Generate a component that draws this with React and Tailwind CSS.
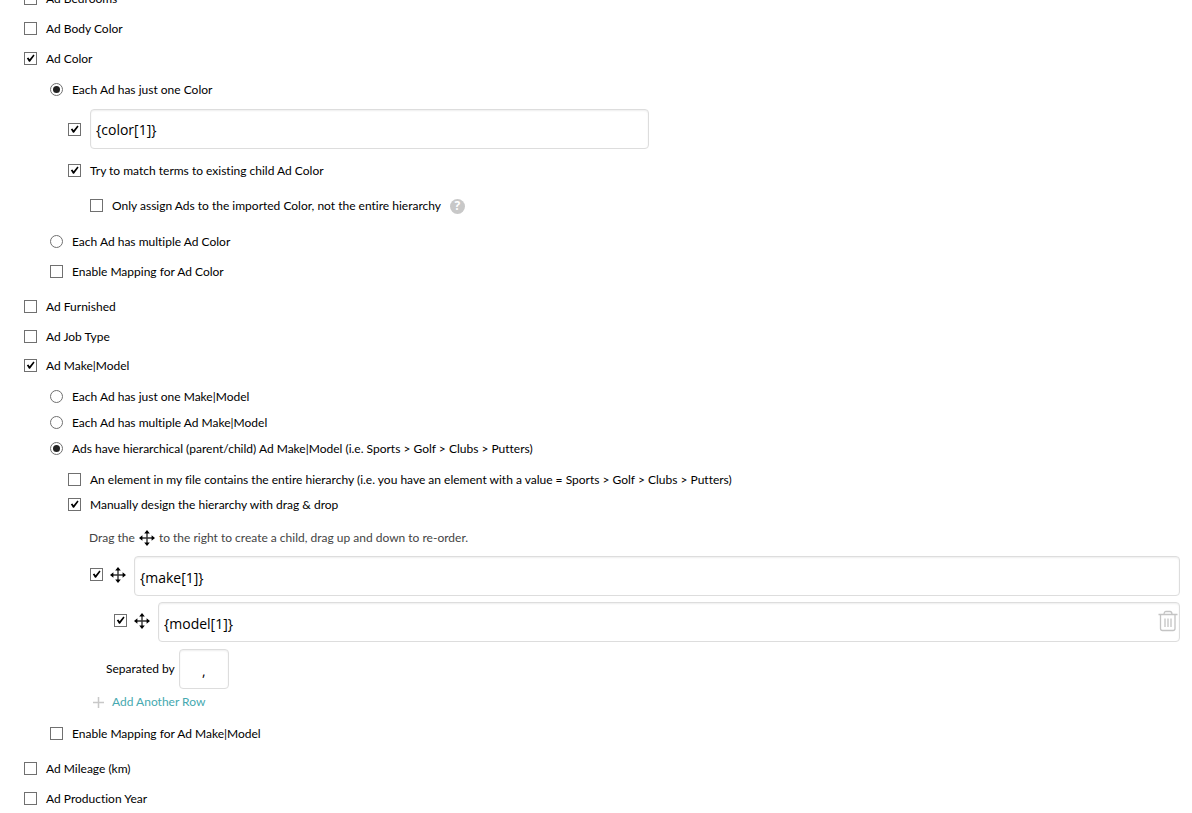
import React from "react";

const fieldClass =
  "h-10 min-w-0 rounded border border-[#dddddd] bg-white font-['Open_Sans',sans-serif] text-sm text-black shadow-[inset_0_1px_2px_rgba(0,0,0,0.07)] outline-none focus:border-[#46a9b0]";

function Checkbox({ checked, ...props }) {
  return (
    <span className="grid shrink-0">
      <input
        type="checkbox"
        defaultChecked={checked}
        className="peer col-start-1 row-start-1 size-[13px] appearance-none border border-[#707070] bg-white"
        {...props}
      />
      <svg
        viewBox="0 0 13 13"
        className="pointer-events-none invisible col-start-1 row-start-1 size-[13px] peer-checked:visible"
        aria-hidden="true"
      >
        <path d="M2.8 6.2 4.4 5.4 5.6 7.2 9.4 2.6 10.6 3.4 6 9.800H5z" fill="#000" />
      </svg>
    </span>
  );
}

function Radio({ checked, name }) {
  return (
    <span className="grid shrink-0">
      <input
        type="radio"
        name={name}
        defaultChecked={checked}
        className="peer col-start-1 row-start-1 size-[13px] appearance-none rounded-full border border-[#707070] bg-white"
      />
      <span className="pointer-events-none invisible col-start-1 row-start-1 size-[7px] place-self-center rounded-full bg-[#222222] peer-checked:visible" />
    </span>
  );
}

function CheckRow({ label, checked, className = "" }) {
  return (
    <label className={`flex h-5 w-fit items-start gap-[9px] ${className}`}>
      <span className="pt-[3px]">
        <Checkbox checked={checked} />
      </span>
      <span>{label}</span>
    </label>
  );
}

function RadioRow({ label, name, checked, className = "" }) {
  return (
    <label className={`flex h-5 w-fit items-start gap-[9px] ${className}`}>
      <span className="pt-[3px]">
        <Radio checked={checked} name={name} />
      </span>
      <span>{label}</span>
    </label>
  );
}

function MoveIcon() {
  return (
    <svg viewBox="0 0 16 16" className="size-4 shrink-0" aria-hidden="true">
      <path d="M8 2v12M2 8h12" stroke="#333" strokeWidth="1.4" />
      <path
        d="M8 0l2.800 3.400H5.200zM8 16l2.800-3.400H5.200zM0 8l3.400-2.800v5.600zM16 8l-3.400-2.800v5.600z"
        fill="#000"
      />
    </svg>
  );
}

function TrashIcon() {
  return (
    <svg
      viewBox="0 0 20 22"
      className="h-[22px] w-5"
      fill="none"
      stroke="#c4c4c4"
      strokeWidth="1.3"
      aria-hidden="true"
    >
      <path d="M0.500 4.500h19M6 4.500C6 2 7 1.500 8 1.500h4c1 0 2 .5 2 3" />
      <path d="M2.500 4.500v14c0 1.500 1 2 2 2h10.500c1.500 0 2-.5 2-2v-14" />
      <path d="M7 8.500v8.500M10 8.500v8.500M13 8.500v8.500" />
    </svg>
  );
}

// Tick box and drag handle in front of a hierarchy field
function RowHandle({ label }) {
  return (
    <span className="flex items-center gap-[7px] pr-2 pb-[3px]">
      <Checkbox checked aria-label={label} />
      <MoveIcon />
    </span>
  );
}

export default function App() {
  return (
    <div className="overflow-hidden bg-white">
      <form className="-mt-[11px] pr-3 pb-1 pl-6 font-['Lato',sans-serif] text-xs leading-5 text-black [font-variant-ligatures:none]">
        <CheckRow label="Ad Bedrooms" />
        <CheckRow label="Ad Body Color" className="mt-[10px]" />
        <CheckRow label="Ad Color" checked className="mt-[10px]" />

        {/* Color options */}
        <div className="mt-[11px] pl-[26px]">
          <RadioRow label="Each Ad has just one Color" name="color" checked />
          <div className="pl-[18px]">
            <div className="mt-[9px] flex items-center gap-[9px]">
              <Checkbox checked aria-label="Use color value" />
              <input
                type="text"
                aria-label="Color"
                defaultValue="{color[1]}"
                className={`${fieldClass} w-full max-w-[559px] px-[5px]`}
              />
            </div>
            <CheckRow
              label="Try to match terms to existing child Ad Color"
              checked
              className="mt-3"
            />
            <div className="mt-[15px] flex items-center gap-[9px] pl-[22px]">
              <CheckRow label="Only assign Ads to the imported Color, not the entire hierarchy" />
              <button
                type="button"
                aria-label="Help"
                className="flex size-[15px] items-center justify-center rounded-full bg-[#c8c8c8] font-['Open_Sans',sans-serif] text-xs leading-none font-bold text-white"
              >
                ?
              </button>
            </div>
          </div>
          <RadioRow
            label="Each Ad has multiple Ad Color"
            name="color"
            className="mt-4"
          />
          <CheckRow label="Enable Mapping for Ad Color" className="mt-[10px]" />
        </div>

        <CheckRow label="Ad Furnished" className="mt-[15px]" />
        <CheckRow label="Ad Job Type" className="mt-[10px]" />
        <CheckRow label="Ad Make|Model" checked className="mt-[9px]" />

        {/* Make|Model options */}
        <div className="mt-[11px] pl-[26px]">
          <RadioRow label="Each Ad has just one Make|Model" name="make" />
          <RadioRow
            label="Each Ad has multiple Ad Make|Model"
            name="make"
            className="mt-[6px]"
          />
          <RadioRow
            label="Ads have hierarchical (parent/child) Ad Make|Model (i.e. Sports > Golf > Clubs > Putters)"
            name="make"
            checked
            className="mt-[6px]"
          />
          <div className="mt-[11px] pl-[18px]">
            <CheckRow label="An element in my file contains the entire hierarchy (i.e. you have an element with a value = Sports > Golf > Clubs > Putters)" />
            <CheckRow
              label="Manually design the hierarchy with drag & drop"
              checked
              className="mt-[5px]"
            />
            <p className="mt-[13px] flex items-center gap-1 pl-[21px] text-[#444444]">
              Drag the <MoveIcon /> to the right to create a child, drag up and
              down to re-order.
            </p>

            {/* Hierarchy rows */}
            <div className="mt-2 flex items-center pl-[22px]">
              <RowHandle label="Use make value" />
              <input
                type="text"
                aria-label="Make"
                defaultValue="{make[1]}"
                className={`${fieldClass} flex-1 px-[5px] pt-[3px]`}
              />
            </div>
            <div className="relative mt-[6px] flex items-center pl-[46px]">
              <RowHandle label="Use model value" />
              <input
                type="text"
                aria-label="Model"
                defaultValue="{model[1]}"
                className={`${fieldClass} flex-1 pt-[3px] pr-7 pl-[5px]`}
              />
              <button
                type="button"
                aria-label="Delete row"
                className="absolute top-2 right-[2px]"
              >
                <TrashIcon />
              </button>
            </div>
            <div className="mt-[7px] flex items-center gap-1 pl-[38px]">
              <label htmlFor="separator">Separated by</label>
              <input
                id="separator"
                type="text"
                defaultValue=","
                className={`${fieldClass} w-[50px] pt-[3px] text-center`}
              />
            </div>
            <a
              href="#add"
              className="mt-[3px] flex w-fit items-center gap-2 pl-[25px] text-[#46a9b0]"
            >
              <svg viewBox="0 0 11 11" className="size-[11px]" aria-hidden="true">
                <path d="M5.500 0v11M0 5.500h11" stroke="#c8c8c8" strokeWidth="1.500" />
              </svg>
              Add Another Row
            </a>
          </div>
          <CheckRow label="Enable Mapping for Ad Make|Model" className="mt-3" />
        </div>

        <CheckRow label="Ad Mileage (km)" className="mt-[15px]" />
        <CheckRow label="Ad Production Year" className="mt-[10px]" />
      </form>
    </div>
  );
}
